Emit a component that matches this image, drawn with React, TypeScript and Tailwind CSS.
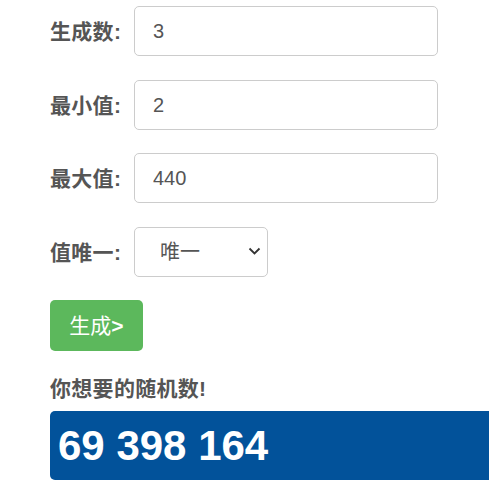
import { useState } from "react";

const fontStack = { fontFamily: '"Liberation Sans", Arial, "Noto Sans CJK SC", sans-serif' };

export default function App() {
  const [count, setCount] = useState("3");
  const [min, setMin] = useState("2");
  const [max, setMax] = useState("440");
  const [unique, setUnique] = useState("1");

  const fields = [
    { label: "生成数:", value: count, set: setCount, gap: "mb-[24px]" },
    { label: "最小值:", value: min, set: setMin, gap: "mb-[23px]" },
    { label: "最大值:", value: max, set: setMax, gap: "mb-[24px]" },
  ];

  return (
    <div className="w-[489px] h-[485px] overflow-hidden bg-white text-[#555]" style={fontStack}>
      <div className="pl-[50px] pt-[6px]">
        {/* ── Inputs ───────────────────────────────────────── */}
        {fields.map((f) => (
          <div key={f.label} className={`flex items-center ${f.gap}`}>
            <label className="w-[84px] text-[21px] font-bold leading-none tracking-[0.3px]">{f.label}</label>
            <input
              value={f.value}
              onChange={(e) => f.set(e.target.value)}
              className="w-[304px] h-[50px] px-[18px] text-[20px] text-[#555] border border-[#ccc] rounded-[5px] outline-none"
            />
          </div>
        ))}

        <div className="flex items-center mb-[23px]">
          <label className="w-[84px] text-[21px] font-bold leading-none tracking-[0.3px]">值唯一:</label>
          <div className="relative w-[134px] h-[50px]">
            <select
              value={unique}
              onChange={(e) => setUnique(e.target.value)}
              className="appearance-none w-full h-full pl-[25px] text-[20px] text-[#555] border border-[#ccc] rounded-[5px] bg-white outline-none"
            >
              <option value="1">唯一</option>
              <option value="0">不唯一</option>
            </select>
            <svg
              className="absolute right-[7px] top-[20px] pointer-events-none"
              width="13"
              height="8"
              viewBox="0 0 13 8"
              fill="none"
              stroke="#333"
              strokeWidth="1.8"
            >
              <path d="M1.5 1.5 L6.5 6.5 L11.5 1.5" />
            </svg>
          </div>
        </div>

        {/* ── Generate button ─────────────────────────────── */}
        <button className="w-[93px] h-[51px] rounded-[5px] bg-[#5cb85c] text-white text-[21px] leading-none">
          生成<span className="font-bold">&gt;</span>
        </button>

        {/* ── Result ──────────────────────────────────────── */}
        <div className="mt-[27px] text-[21px] font-bold leading-none tracking-[0.3px]">你想要的随机数!</div>
        <div className="mt-[12px] w-[480px] h-[69px] rounded-[5px] bg-[#02529a] flex items-center pl-[8px]">
          <span className="text-white text-[42px] font-bold leading-none">69 398 164</span>
        </div>
      </div>
    </div>
  );
}
